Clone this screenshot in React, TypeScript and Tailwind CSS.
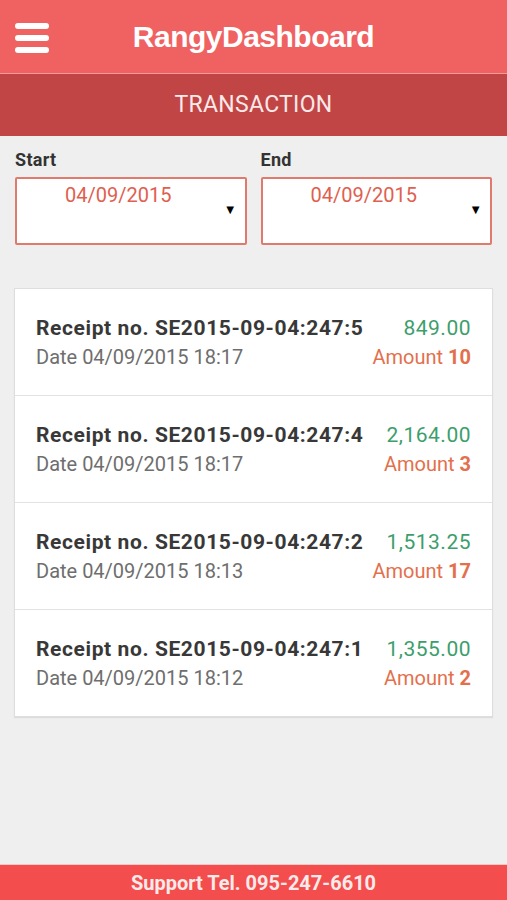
import React from 'react'

const rows = [
  { no: 'SE2015-09-04:247:5', date: '04/09/2015 18:17', total: '849.00', amount: 10 },
  { no: 'SE2015-09-04:247:4', date: '04/09/2015 18:17', total: '2,164.00', amount: 3 },
  { no: 'SE2015-09-04:247:2', date: '04/09/2015 18:13', total: '1,513.25', amount: 17 },
  { no: 'SE2015-09-04:247:1', date: '04/09/2015 18:12', total: '1,355.00', amount: 2 },
]

function DateBox({ label, value }: { label: string; value: string }) {
  return (
    <div className="flex-1">
      <div className="text-[18px] font-bold text-[#333] tracking-[0.3px] leading-[22px] mb-[6px]">{label}</div>
      <div className="relative h-[68px] bg-white border-2 border-[#e07a6c] rounded-[2px]">
        <span className="absolute left-[48px] top-[1px] text-[20px] text-[#e0604f]">{value}</span>
        <span className="absolute right-[8px] top-[21px] text-[13px] text-black">▼</span>
      </div>
    </div>
  )
}

export default function App() {
  return (
    <div className="w-[507px] h-[900px] flex flex-col bg-[#efefef] overflow-hidden" style={{ fontFamily: 'Roboto, "Noto Sans", sans-serif' }}>
      <header className="h-[73px] bg-[#f06262] flex items-center relative">
        <div className="absolute left-[15px] top-[23px] flex flex-col gap-[6px]">
          <span className="block w-[34px] h-[6px] rounded-full bg-white" />
          <span className="block w-[34px] h-[6px] rounded-full bg-white" />
          <span className="block w-[34px] h-[6px] rounded-full bg-white" />
        </div>
        <h1
          className="w-full text-center text-white font-bold text-[30px] tracking-[-0.5px] leading-none pt-[1px]"
          style={{ fontFamily: '"Liberation Sans", Arial, sans-serif' }}
        >
          RangyDashboard
        </h1>
      </header>
      <div className="h-px bg-[#f49a9a]" />
      <div className="h-[62px] bg-[#c24545] flex items-center justify-center text-[23px] tracking-[0.3px] text-[#fbeaea]">
        TRANSACTION
      </div>

      <main className="flex-1 px-[14px]">
        <div className="flex gap-[14px] pt-[13px] px-px">
          <DateBox label="Start" value="04/09/2015" />
          <DateBox label="End" value="04/09/2015" />
        </div>

        <div className="mt-[43px] bg-white border border-[#dedede] shadow-[0_1px_1px_rgba(0,0,0,0.08)]">
          {rows.map((r, i) => (
            <div
              key={r.no}
              className={
                'flex items-center justify-between pl-[21px] pr-[21px] ' +
                (i > 0 ? 'h-[107px] border-t border-[#e2e2e2]' : 'h-[106px]')
              }
            >
              <div className="flex flex-col">
                <span className="text-[21px] font-bold text-[#383838] tracking-[0.6px] leading-[29px]">Receipt no. {r.no}</span>
                <span className="text-[20px] text-[#6e6e6e] leading-[28px]">Date {r.date}</span>
              </div>
              <div className="flex flex-col items-end">
                <span className="text-[21px] text-[#3d9e6c] tracking-[0.5px] leading-[29px]">{r.total}</span>
                <span className="text-[20px] text-[#e3704d] leading-[28px]">
                  Amount <b>{r.amount}</b>
                </span>
              </div>
            </div>
          ))}
        </div>
      </main>

      <div className="h-px bg-[#f7c8c8]" />
      <footer className="h-[35px] bg-[#f44d4d] flex items-center justify-center text-[20px] font-bold text-[#fbeaea]">
        Support Tel. 095-247-6610
      </footer>
    </div>
  )
}
